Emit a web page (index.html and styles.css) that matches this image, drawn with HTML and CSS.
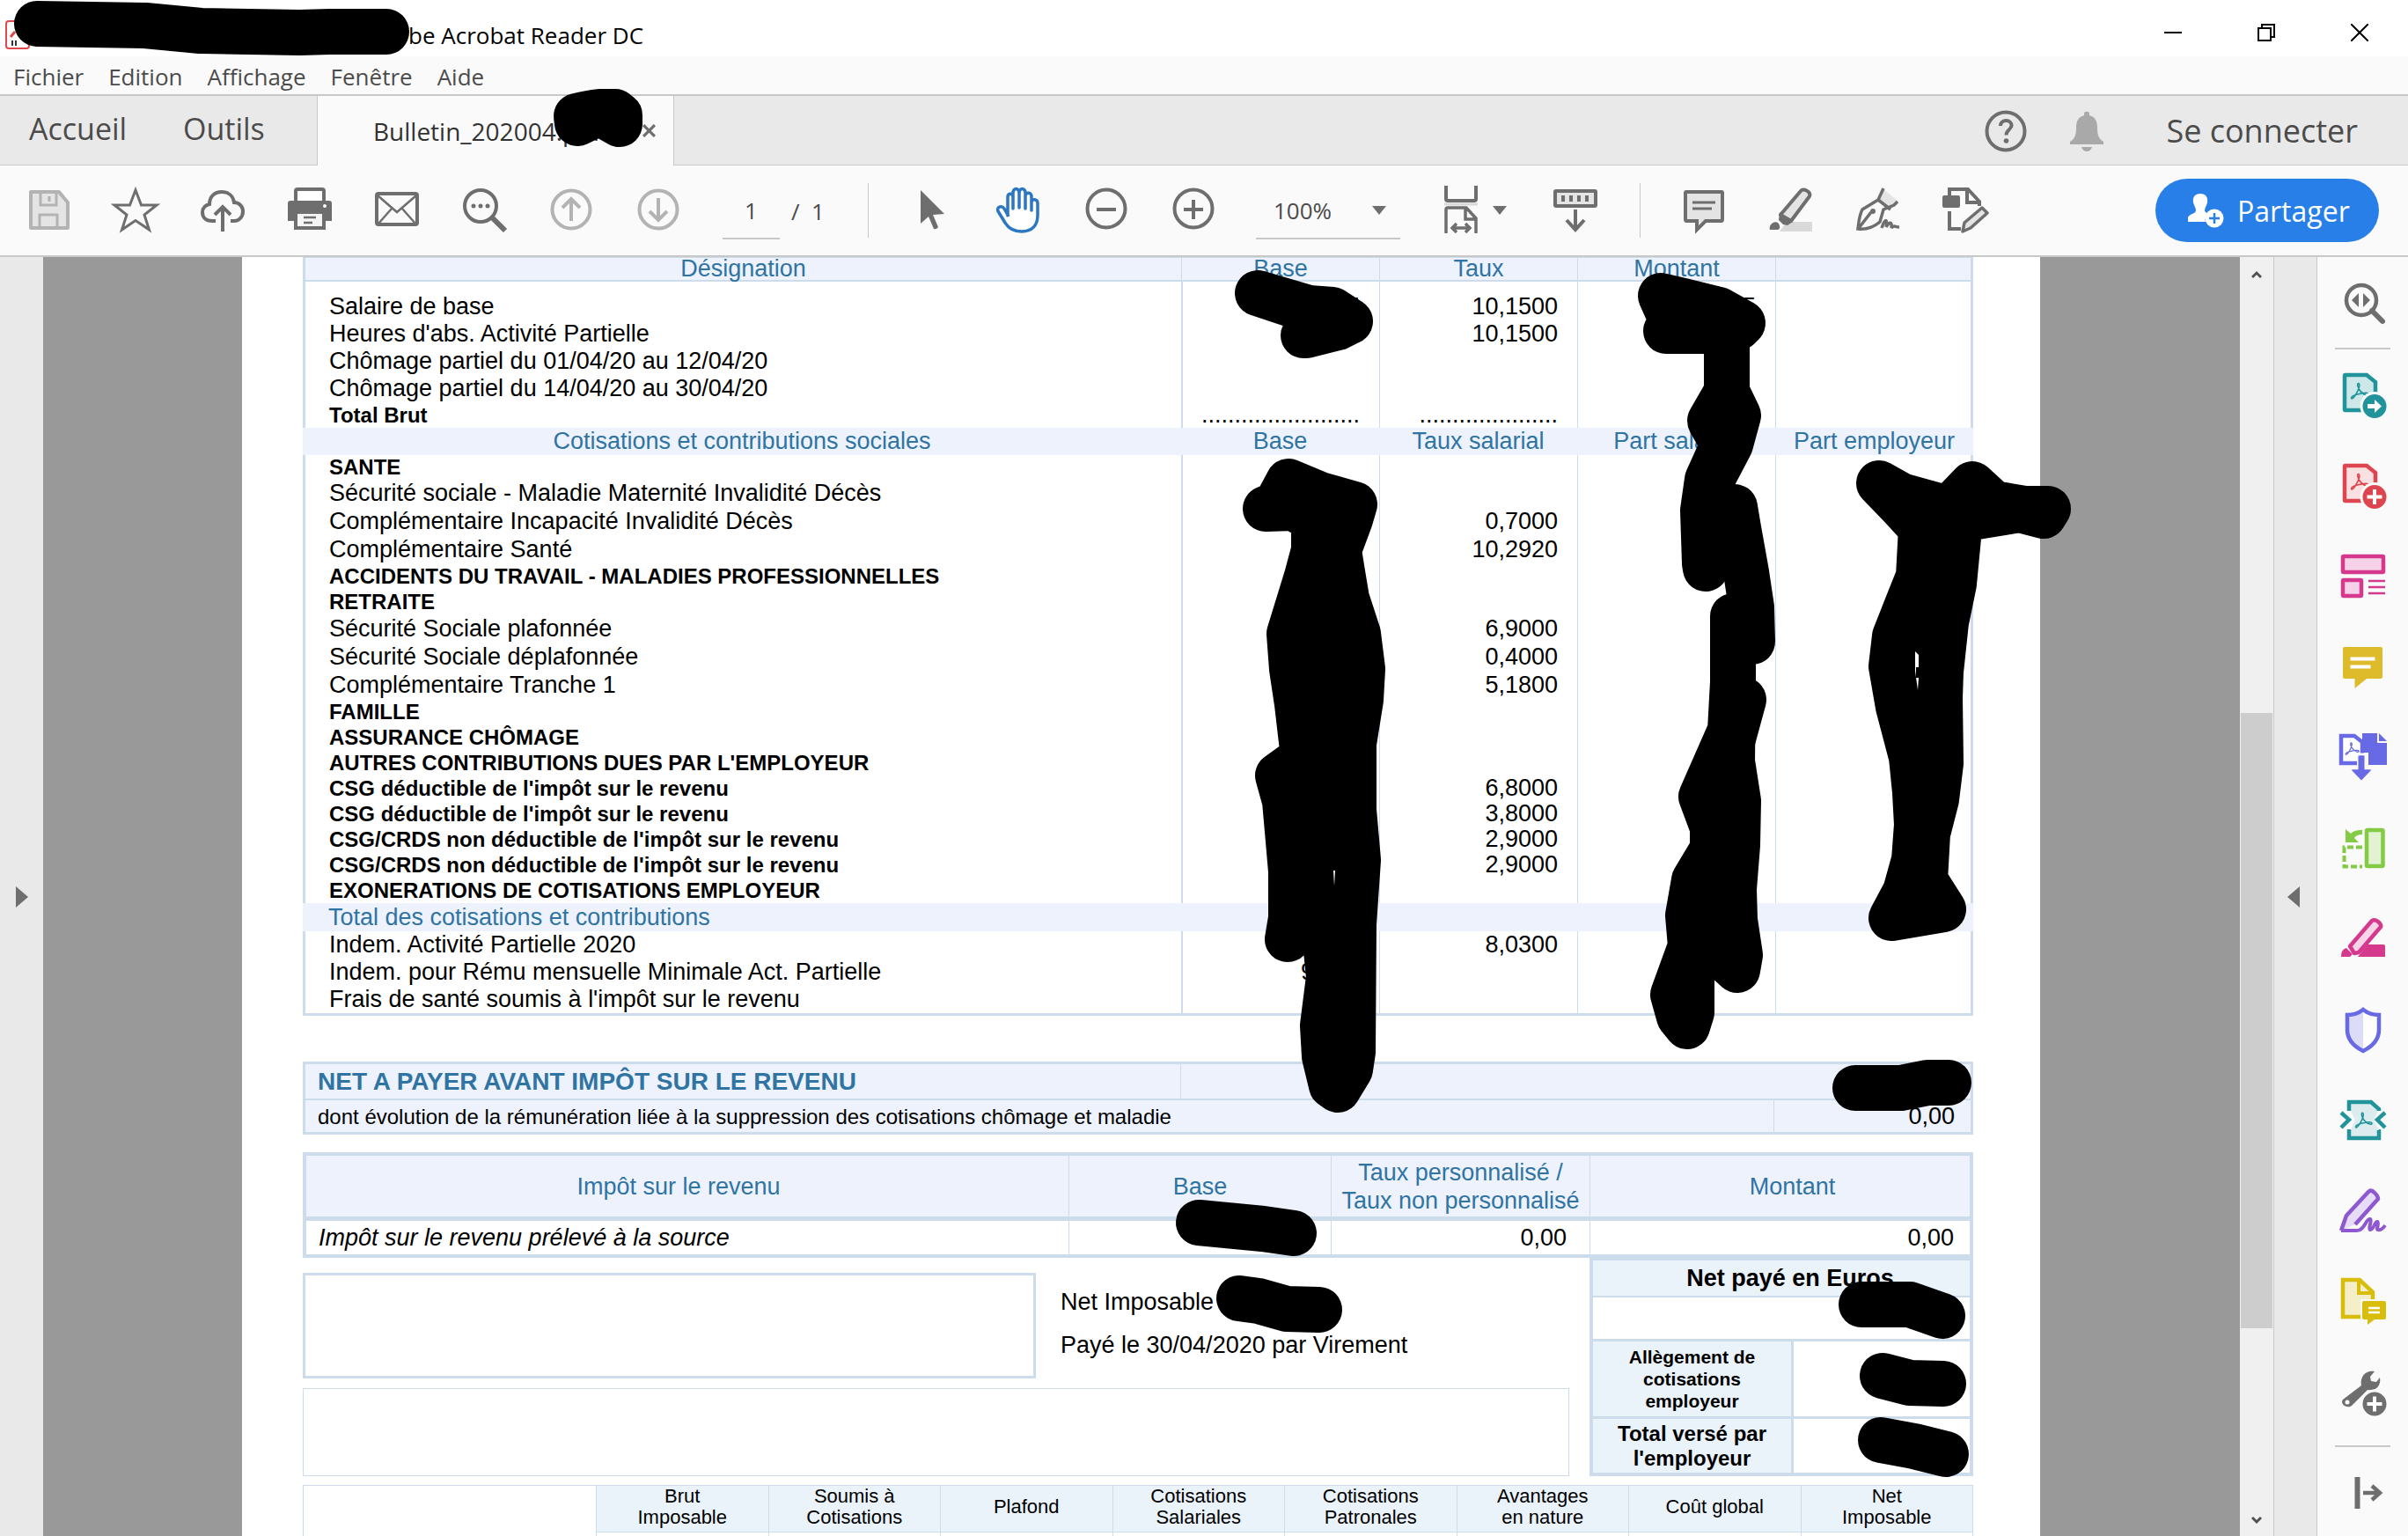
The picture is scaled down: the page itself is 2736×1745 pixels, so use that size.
FILE: index.html
```html
<!DOCTYPE html>
<html lang="fr">
<head>
<meta charset="utf-8">
<title>Adobe Acrobat Reader DC</title>
<link rel="stylesheet" href="styles.css">
</head>
<body>
<svg class="defs" aria-hidden="true">
  <symbol id="acro" viewBox="0 0 20 20"><path d="M2 18C4 18 9.500 9 9.800 4.500C9.900 1.500 7.500 1.500 8 4.500C8.500 8.500 13 14 17.500 14.500C20 14.500 19.500 12.200 16.500 12.200C12 12.200 2 14.500 1.500 17C1.400 17.700 1.500 18 2 18Z" fill="none" stroke="currentColor" stroke-width="1.500"/></symbol>
</svg>

<header class="titlebar">
  <svg class="app-icon" viewBox="0 0 28 34"><rect x="1" y="1" width="26" height="31" rx="3" fill="#fff" stroke="#e0484d" stroke-width="2"/><path d="M6 19l5-6" stroke="#e0484d" stroke-width="3"/><path d="M8 23v6M12 23v6" stroke="#333" stroke-width="2"/></svg>
  <span class="app-title">be Acrobat Reader DC</span>
  <div class="window-buttons">
    <button type="button" aria-label="Réduire"><svg viewBox="0 0 20 20"><path d="M0 10h20" stroke="#000" stroke-width="2"/></svg></button>
    <button type="button" aria-label="Restaurer"><svg viewBox="0 0 20 20"><path d="M1 5h14v14H1zM5 5V1h14v14h-4" fill="none" stroke="#000" stroke-width="2"/></svg></button>
    <button type="button" aria-label="Fermer"><svg viewBox="0 0 20 20"><path d="M0 0l20 20M20 0L0 20" stroke="#000" stroke-width="2"/></svg></button>
  </div>
  <svg class="marks" width="480" height="70" viewBox="0 0 480 70"><path d="M42 27L165 29L228 35L340 37L375 36L439 36"/></svg>
</header>

<nav class="menubar">
  <button type="button">Fichier</button><button type="button">Edition</button><button type="button">Affichage</button><button type="button">Fenêtre</button><button type="button">Aide</button>
</nav>

<div class="tabbar">
  <button type="button" class="tab-link">Accueil</button>
  <button type="button" class="tab-link">Outils</button>
  <div class="doc-tab">
    <span class="doc-name">Bulletin_202004.pdf</span>
    <button type="button" class="doc-close" aria-label="Fermer l'onglet"><svg viewBox="0 0 14 14"><path d="M1 1l12 12M13 1L1 13" stroke="#6e6e6e" stroke-width="3"/></svg></button>
    <svg class="marks" width="404" height="80" viewBox="362 109 404 80"><path d="M657 140L656 132Q672 128 682 127L700 127L705 131L705 141L682 128Z"/></svg>
  </div>
  <div class="account">
    <button type="button" aria-label="Aide"><svg viewBox="0 0 48 48"><circle cx="24" cy="24" r="21.500" fill="none" stroke="#6e6e6e" stroke-width="4"/><path d="M18 18c0-4 3-6 6.500-6s6 2.500 6 5.500c0 4.500-6 5-6 11" fill="none" stroke="#6e6e6e" stroke-width="4"/><circle cx="24.500" cy="35" r="2.800" fill="#6e6e6e"/></svg></button>
    <button type="button" aria-label="Notifications"><svg viewBox="0 0 48 48"><path d="M21 6V4c0-3 6-3 6 0v2c7 2 9 7 9 14 0 9 2 13 7 16v3H5v-3c5-3 7-7 7-16 0-7 2-12 9-14zM18 42h12c-1 3-3 5-6 5s-5-2-6-5z" fill="#a9a9a9"/></svg></button>
    <a href="#connexion">Se connecter</a>
  </div>
</div>

<div class="toolbar">
  <button type="button" class="tool off" aria-label="Enregistrer"><svg viewBox="0 0 56 56"><path d="M8 7h32l10 12v29H8z" fill="#e4e4e4" stroke="currentColor" stroke-width="4" stroke-linejoin="round"/><path d="M19 7v15h18V7M18 48V33h20v15M29 12v6" fill="none" stroke="currentColor" stroke-width="3"/></svg></button>
  <button type="button" class="tool" aria-label="Favoris"><svg viewBox="0 0 56 56"><path d="M28 5l6.500 17H52L38 33l5.500 17L28 39.500 12.500 50 18 33 4 22h17.500z" fill="none" stroke="currentColor" stroke-width="3"/></svg></button>
  <button type="button" class="tool" aria-label="Envoyer vers le cloud"><svg viewBox="0 0 56 56"><path d="M20 40h-4C9 40 5 36 5 30c0-5 4-8 8-9 0-9 6-14 14-14s13 5 14 12c6 0 10 5 10 10 0 6-4 11-10 11h-4" fill="none" stroke="currentColor" stroke-width="4"/><path d="M28 52V25M19 33l9-9 9 9" fill="none" stroke="currentColor" stroke-width="4"/></svg></button>
  <button type="button" class="tool" aria-label="Imprimer"><svg viewBox="0 0 56 56"><path d="M12 17V6q0-2 2-2h28q2 0 2 2v11" fill="#fff" stroke="currentColor" stroke-width="4"/><path d="M6 17h44q3 0 3 3v20h-7V30H10v10H3V20q0-3 3-3z" fill="currentColor"/><path d="M12 30h32v18H12z" fill="#f4f4f4" stroke="currentColor" stroke-width="4"/><path d="M21 36h14M21 42h10" stroke="currentColor" stroke-width="2.500"/><circle cx="45" cy="23" r="2" fill="#fff"/></svg></button>
  <button type="button" class="tool" aria-label="Courriel"><svg viewBox="0 0 56 56"><rect x="5" y="9" width="46" height="35" rx="2" fill="none" stroke="currentColor" stroke-width="4"/><path d="M6 11l22 19L50 11M7 43l15-17M49 43L34 26" fill="none" stroke="currentColor" stroke-width="2.500"/></svg></button>
  <button type="button" class="tool" aria-label="Rechercher"><svg viewBox="0 0 56 56"><circle cx="24" cy="23" r="18" fill="none" stroke="currentColor" stroke-width="4"/><path d="M37 36l15 15" stroke="currentColor" stroke-width="6"/><g fill="currentColor"><circle cx="16" cy="23" r="2.500"/><circle cx="24" cy="23" r="2.500"/><circle cx="32" cy="23" r="2.500"/></g></svg></button>
  <button type="button" class="tool off" aria-label="Page précédente"><svg viewBox="0 0 56 56"><circle cx="28" cy="27" r="21.500" fill="none" stroke="currentColor" stroke-width="4"/><path d="M28 40V15M18 25l10-10 10 10" fill="none" stroke="currentColor" stroke-width="4"/></svg></button>
  <button type="button" class="tool off" aria-label="Page suivante"><svg viewBox="0 0 56 56"><circle cx="28" cy="27" r="21.500" fill="none" stroke="currentColor" stroke-width="4"/><path d="M28 14v25M18 29l10 10 10-10" fill="none" stroke="currentColor" stroke-width="4"/></svg></button>
  <label class="page-field"><input type="text" value="1" aria-label="Page"><span>/&nbsp; 1</span></label>
  <span class="rule"></span>
  <button type="button" class="tool" aria-label="Sélection"><svg viewBox="0 0 56 56"><path d="M15 5v38l9-8 6 14q3 1 5-2l-6-14 13-1z" fill="currentColor"/></svg></button>
  <button type="button" class="tool on" aria-label="Main"><svg viewBox="0 0 56 56"><path d="M15 35V13c0-5 6-5 6 0v13-18c0-6 7-6 7 0v17V8c0-6 7-6 7 0v18V12c0-5 7-5 7 0v16-9c0-5 7-4 7 1v13c0 13-7 19-18 19C20 52 15 47 12 42L4 29c-2-5 4-7 7-3l5 9" fill="#fff" stroke="currentColor" stroke-width="3.500" stroke-linejoin="round"/></svg></button>
  <button type="button" class="tool" aria-label="Zoom arrière"><svg viewBox="0 0 56 56"><circle cx="28" cy="26" r="21.500" fill="none" stroke="currentColor" stroke-width="4"/><path d="M17 27h22" stroke="currentColor" stroke-width="4"/></svg></button>
  <button type="button" class="tool" aria-label="Zoom avant"><svg viewBox="0 0 56 56"><circle cx="28" cy="26" r="21.500" fill="none" stroke="currentColor" stroke-width="4"/><path d="M17 27h22M28 16v22" stroke="currentColor" stroke-width="4"/></svg></button>
  <label class="zoom-field"><select aria-label="Zoom"><option>100%</option></select><svg viewBox="0 0 16 10"><path d="M0 0h16l-8 10z" fill="#6e6e6e"/></svg></label>
  <button type="button" class="tool fit" aria-label="Ajuster"><svg viewBox="0 0 56 56"><path d="M10 0v15q0 2 2 2h30q2 0 2-2V0" fill="none" stroke="currentColor" stroke-width="4"/><path d="M8 21h38" stroke="#d9d9d9" stroke-width="3"/><path d="M10 54V27q0-2 2-2h21l11 12v17M32 25v13h12M17 48h20M22 43l-5 5 5 5M32 43l5 5-5 5" fill="none" stroke="currentColor" stroke-width="3.500"/></svg><svg class="caret" viewBox="0 0 16 10"><path d="M0 0h16l-8 10z" fill="currentColor"/></svg></button>
  <button type="button" class="tool keys" aria-label="Défilement"><svg viewBox="0 0 56 56"><rect x="5" y="6" width="46" height="17" rx="1" fill="#e4e4e4" stroke="currentColor" stroke-width="4"/><path d="M14 11v7M23 11v7M32 11v7M41 11v7" stroke="currentColor" stroke-width="4"/><path d="M28 27v22M18 39l10 11 10-11" fill="none" stroke="currentColor" stroke-width="4"/></svg></button>
  <span class="rule"></span>
  <button type="button" class="tool" aria-label="Commentaire"><svg viewBox="0 0 56 56"><path d="M8 7h40q1 0 1 1v30q0 2-1 2H30L20 50V40H8q-1 0-1-2V8q0-1 1-1z" fill="#e4e4e4" stroke="currentColor" stroke-width="4"/><path d="M15 19h26M15 26h22" stroke="currentColor" stroke-width="3"/></svg></button>
  <button type="button" class="tool" aria-label="Surligner"><svg viewBox="0 0 56 56"><path d="M23 41h29v11H15z" fill="#d9d9d9"/><path d="M16 33L39 6c3-4 12 1 10 6L28 40z" fill="#e4e4e4" stroke="currentColor" stroke-width="4" stroke-linejoin="round"/><path d="M15 30l15 11-6 4-5-1-5-5zM4 50c-2-5 5-11 9-8 3 3 3 7 0 8z" fill="currentColor"/></svg></button>
  <button type="button" class="tool" aria-label="Signer"><svg viewBox="0 0 56 56"><path d="M34 4l-6 13 12 10 10-10z" fill="#e4e4e4"/><path d="M34 3l-6 13-18 11C6 35 6 42 5 49c9 1 18-2 25-8l4-14 12-5 4-4M6 48l14-18M28 16l14 11" fill="none" stroke="currentColor" stroke-width="3.500"/><circle cx="22" cy="29" r="3" fill="currentColor"/><path d="M32 48c4-12 7-10 5-1 4-7 7-6 6 1 3-4 4-1 9-1" fill="none" stroke="currentColor" stroke-width="3.500"/></svg></button>
  <button type="button" class="tool" aria-label="Modifier"><svg viewBox="0 0 56 56"><path d="M10 12V4h21l13 14v5M30 4v15h14M10 29v20h13" fill="none" stroke="currentColor" stroke-width="4"/><rect x="2" y="11" width="20" height="14" rx="2" fill="currentColor"/><path d="M27 42l20-17 6 6-19 17-9 4z" fill="#e4e4e4" stroke="currentColor" stroke-width="3.500" stroke-linejoin="round"/></svg></button>
  <button type="button" class="share"><svg viewBox="0 0 42 40"><path d="M15 1c6 0 9 4 8 10-1 4-3 6-3 9 0 2 3 3 5 5-4 2-5 5-4 8H1V28c1-4 9-4 9-8 0-3-2-5-3-9C6 5 9 1 15 1z" fill="#fff"/><circle cx="31" cy="29" r="10.500" fill="#fff"/><path d="M31 23v12M25 29h12" stroke="#277fe7" stroke-width="2.500"/></svg>Partager</button>
</div>

<div class="workspace">
  <button type="button" class="side-strip" aria-label="Volet gauche"><svg viewBox="0 0 14 24"><path d="M0 0l14 12L0 24z" fill="#6e6e6e"/></svg></button>
  <main class="canvas">
    <article class="sheet">
      <table class="pay">
        <colgroup><col><col class="num"><col class="num"><col class="num"><col class="num"></colgroup>
        <tbody class="tight">
        <tr class="top"><th>Désignation</th><th>Base</th><th>Taux</th><th>Montant</th><th></th></tr>
        <tr class="line spaced"><td>Salaire de base</td><td>5</td><td>10,1500</td><td>5</td><td></td></tr>
        <tr class="line"><td>Heures d'abs. Activité Partielle</td><td></td><td>10,1500</td><td></td><td></td></tr>
        <tr class="line"><td>Chômage partiel du 01/04/20 au 12/04/20</td><td></td><td></td><td></td><td></td></tr>
        <tr class="line"><td>Chômage partiel du 14/04/20 au 30/04/20</td><td></td><td></td><td></td><td></td></tr>
        <tr class="line strong dots"><td>Total Brut</td><td>........................</td><td>.....................</td><td></td><td></td></tr>
        </tbody>
        <tbody>
        <tr class="band"><th>Cotisations et contributions sociales</th><th>Base</th><th>Taux salarial</th><th>Part salarial</th><th>Part employeur</th></tr>
        <tr class="line strong first"><td>SANTE</td><td></td><td></td><td></td><td></td></tr>
        <tr class="line"><td>Sécurité sociale - Maladie Maternité Invalidité Décès</td><td></td><td></td><td></td><td></td></tr>
        <tr class="line"><td>Complémentaire Incapacité Invalidité Décès</td><td></td><td>0,7000</td><td></td><td class="inset">6</td></tr>
        <tr class="line"><td>Complémentaire Santé</td><td></td><td>10,2920</td><td></td><td></td></tr>
        <tr class="line strong"><td>ACCIDENTS DU TRAVAIL - MALADIES PROFESSIONNELLES</td><td></td><td></td><td></td><td></td></tr>
        <tr class="line strong"><td>RETRAITE</td><td></td><td></td><td></td><td></td></tr>
        <tr class="line"><td>Sécurité Sociale plafonnée</td><td></td><td>6,9000</td><td></td><td></td></tr>
        <tr class="line"><td>Sécurité Sociale déplafonnée</td><td></td><td>0,4000</td><td></td><td></td></tr>
        <tr class="line"><td>Complémentaire Tranche 1</td><td></td><td>5,1800</td><td></td><td></td></tr>
        <tr class="line strong"><td>FAMILLE</td><td></td><td></td><td></td><td></td></tr>
        <tr class="line strong"><td>ASSURANCE CHÔMAGE</td><td></td><td></td><td></td><td></td></tr>
        <tr class="line strong"><td>AUTRES CONTRIBUTIONS DUES PAR L'EMPLOYEUR</td><td></td><td></td><td></td><td></td></tr>
        <tr class="line strong"><td>CSG déductible de l'impôt sur le revenu</td><td></td><td>6,8000</td><td></td><td></td></tr>
        <tr class="line strong"><td>CSG déductible de l'impôt sur le revenu</td><td></td><td>3,8000</td><td></td><td></td></tr>
        <tr class="line strong"><td>CSG/CRDS non déductible de l'impôt sur le revenu</td><td></td><td>2,9000</td><td></td><td></td></tr>
        <tr class="line strong"><td>CSG/CRDS non déductible de l'impôt sur le revenu</td><td></td><td>2,9000</td><td></td><td></td></tr>
        <tr class="line strong"><td>EXONERATIONS DE COTISATIONS EMPLOYEUR</td><td></td><td></td><td></td><td>9</td></tr>
        </tbody>
        <tbody class="tight">
        <tr class="band"><th class="start">Total des cotisations et contributions</th><th></th><th></th><th></th><th></th></tr>
        <tr class="line"><td>Indem. Activité Partielle 2020</td><td></td><td>8,0300</td><td></td><td></td></tr>
        <tr class="line"><td>Indem. pour Rému mensuelle Minimale Act. Partielle</td><td class="inset">9</td><td></td><td></td><td></td></tr>
        <tr class="line last"><td>Frais de santé soumis à l'impôt sur le revenu</td><td></td><td></td><td></td><td></td></tr>
        </tbody>
      </table>

      <section class="net">
        <div class="net-row main"><strong>NET A PAYER AVANT IMPÔT SUR LE REVENU</strong><span></span></div>
        <div class="net-row detail"><span>dont évolution de la rémunération liée à la suppression des cotisations chômage et maladie</span><span>0,00</span></div>
      </section>

      <table class="tax">
        <colgroup><col><col class="c-base"><col class="c-rate"><col class="c-amount"></colgroup>
        <tr><th>Impôt sur le revenu</th><th>Base</th><th>Taux personnalisé /<br>Taux non personnalisé</th><th>Montant</th></tr>
        <tr><td>Impôt sur le revenu prélevé à la source</td><td></td><td>0,00</td><td>0,00</td></tr>
      </table>

      <div class="summary">
        <div class="summary-left">
          <div class="summary-top">
            <div class="frame"></div>
            <div class="paid"><p>Net Imposable</p><p>Payé le 30/04/2020 par Virement</p></div>
          </div>
          <div class="frame thin"></div>
        </div>
        <table class="totals">
          <colgroup><col class="c-label"><col></colgroup>
          <tr><th colspan="2" class="head">Net payé en Euros</th></tr>
          <tr><td colspan="2" class="amount"></td></tr>
          <tr><th class="small">Allègement de<br>cotisations<br>employeur</th><td></td></tr>
          <tr><th class="medium">Total versé par<br>l'employeur</th><td></td></tr>
        </table>
      </div>

      <table class="cumul">
        <colgroup><col class="c-first"><col><col><col><col><col><col><col><col></colgroup>
        <tr><td></td><th>Brut<br>Imposable</th><th>Soumis à<br>Cotisations</th><th>Plafond</th><th>Cotisations<br>Salariales</th><th>Cotisations<br>Patronales</th><th>Avantages<br>en nature</th><th>Coût global</th><th>Net<br>Imposable</th></tr>
        <tr><td></td><td></td><td></td><td></td><td></td><td></td><td></td><td></td><td></td></tr>
      </table>

      <svg class="marks" width="2043" height="1453" viewBox="275 292 2043 1453">
        <path d="M1429 333L1487 350L1514 352L1534 365L1520 372L1484 381L1481 381L1495 355Z"/>
        <path d="M1887 336L1913 342L1953 352L1980 367L1975 372L1945 376L1893 376L1900 365Z"/>
        <path d="M1962 380L1962 445L1943 478L1958 505L1940 545L1935 580L1937 640L1938 646L1937 580L1945 545L1966 505L1975 472L1962 445Z"/>
        <path class="open" d="M1971 576L1975 600L1984 650L1990 690L1991 729"/>
        <path class="open" d="M1969 700L1969 790L1981 795L1966 850"/>
        <path d="M1969 775L1966 830L1933 905L1946 940L1946 965L1925 1000L1918 1040L1921 1075L1901 1130L1908 1155L1917 1166L1922 1150L1922 1095L1950 1080L1974 1102L1977 1085L1971 1045L1970 1010L1974 960L1975 910L1968 865Z"/>
        <path d="M1464 547L1500 562L1539 573L1534 590L1521 625L1525 650L1530 680L1543 720L1548 760L1546 795L1538 845L1538 920L1543 977L1538 1050L1537 1195L1534 1215L1520 1238L1513 1233L1505 1200L1503 1165L1510 1110L1505 1060L1480 1050L1463 1067L1467 1043L1467 990L1460 910L1452 881L1481 860L1474 800L1468 760L1465 720L1485 655L1493 625L1493 590L1470 577L1438 578L1450 573Z"/>
        <path d="M2135 549L2160 563L2214 578L2241 550L2265 572L2300 578L2327 578L2322 586L2295 579L2227 590L2220 663L2211 707L2205 763L2204 793L2205 867L2200 908L2190 947L2187 1000L2208 1033L2149 1043L2165 1013L2175 977L2178 937L2176 900L2172 860L2157 803L2149 757L2153 723L2166 690L2180 655L2183 600L2160 575Z"/>
        <path class="open" d="M2108 1236H2160L2190 1230H2214"/>
        <path class="open" d="M1362 1389L1435 1396L1470 1401"/>
        <path class="open" d="M1408 1475L1430 1478L1462 1487L1499 1488"/>
        <path class="open" d="M2115 1482H2170L2207 1495"/>
        <path class="open" d="M2139 1563L2170 1571L2208 1572"/>
        <path class="open" d="M2137 1636L2175 1643L2211 1652"/>
        <g class="gap"><path d="M2176 740l4 4v14h-3v12h3l-1 14-3-22z"/><path d="M1515 989h2l-1 17z"/></g>
      </svg>
    </article>
  </main>
  <div class="scrollbar">
    <svg viewBox="0 0 12 10"><path d="M1 8l5-5 5 5" fill="none" stroke="#505050" stroke-width="3"/></svg>
    <div class="thumb"></div>
    <svg viewBox="0 0 12 10"><path d="M1 2l5 5 5-5" fill="none" stroke="#505050" stroke-width="3"/></svg>
  </div>
  <button type="button" class="side-strip right" aria-label="Volet droit"><svg viewBox="0 0 14 24"><path d="M14 0L0 12l14 12z" fill="#6e6e6e"/></svg></button>
  <aside class="tools">
    <button type="button" aria-label="Rechercher des outils"><svg viewBox="0 0 56 56" class="gray"><circle cx="26" cy="25" r="17" fill="none" stroke="currentColor" stroke-width="4.500"/><path d="M38 37l12 12" stroke="currentColor" stroke-width="6" stroke-linecap="round"/><path d="M23 17v16l-8-8zM28 17v16l8-8z" fill="currentColor"/></svg></button>
    <hr>
    <button type="button" aria-label="Exporter"><svg viewBox="0 0 56 56" class="teal"><path d="M8 5h24l10 8v32H8q-1 0-1-1V6q0-1 1-1z" fill="#cde8e8" stroke="currentColor" stroke-width="4.500"/><use href="#acro" x="13" y="12" width="22" height="22"/><circle cx="41" cy="40.500" r="15" fill="currentColor" stroke="#fafafa" stroke-width="3"/><path d="M33 38h8v-5l8 7.500-8 7.500v-5h-8z" fill="#fff"/></svg></button>
    <button type="button" aria-label="Créer"><svg viewBox="0 0 56 56" class="red"><path d="M8 5h24l10 8v32H8q-1 0-1-1V6q0-1 1-1z" fill="#fbe0e2" stroke="currentColor" stroke-width="4.500"/><use href="#acro" x="13" y="12" width="22" height="22"/><circle cx="41" cy="40.500" r="15" fill="currentColor" stroke="#fafafa" stroke-width="3"/><path d="M32.500 40.500h17M41 32v17" stroke="#fff" stroke-width="4"/></svg></button>
    <button type="button" aria-label="Organiser"><svg viewBox="0 0 56 56" class="pink"><g fill="#f6d2e8" stroke="currentColor" stroke-width="4.500"><rect x="5" y="5" width="46" height="18" rx="1"/><rect x="5" y="32" width="21" height="18" rx="1"/></g><path d="M34 33h19M34 40h19M34 47h19" stroke="currentColor" stroke-width="2.500"/></svg></button>
    <button type="button" aria-label="Commenter"><svg viewBox="0 0 56 56" class="gold"><path d="M7 5h41q2 0 2 2v32q0 2-2 2H32L18.500 52V41H7q-2 0-2-2V7q0-2 2-2z" fill="currentColor"/><path d="M13.500 18.500h28M13.500 27.500h23" stroke="#fff" stroke-width="4"/></svg></button>
    <button type="button" aria-label="Combiner"><svg viewBox="0 0 56 56" class="blue"><path d="M3 3h15l9 7v24H3z" fill="#fff" stroke="currentColor" stroke-width="4.500"/><use href="#acro" x="7" y="9" width="17" height="17"/><path d="M27 0h17v11h11v25H34V22h-7z" fill="currentColor"/><path d="M46 0l9 9h-9z" fill="currentColor"/><path d="M22.500 24h7v16h10L26 54 12.500 40h10z" fill="currentColor" stroke="#fafafa" stroke-width="3"/><path d="M22.500 25.500h7v16h8L26 53.500 14.500 41.500h8z" fill="currentColor"/></svg></button>
    <button type="button" aria-label="Recadrer"><svg viewBox="0 0 56 56" class="green"><rect x="32" y="7" width="18.500" height="41" rx="1" fill="#e2f2d3" stroke="currentColor" stroke-width="4.500"/><path d="M27 26.500H6.500v22H27" fill="none" stroke="currentColor" stroke-width="4" stroke-dasharray="7 3"/><path d="M27 7c-7 0-10 1-13 4l-6-5v15h15l-5-5c2-3 5-4 9-4z" fill="currentColor"/></svg></button>
    <button type="button" aria-label="Biffer"><svg viewBox="0 0 56 56" class="pink"><path d="M13 36L38 7q3-2 7 1t3 6L23 43l-5 1z" fill="#f9d3e8" stroke="currentColor" stroke-width="4.500" stroke-linejoin="round"/><path d="M33 34h18q2 0 2 2v12H22zM3 48c0-6 2-9 6-10l7 7-3 3z" fill="currentColor"/></svg></button>
    <button type="button" aria-label="Protéger"><svg viewBox="0 0 56 56" class="blue"><path d="M28 5c5 4 11 6 18 6v17c0 12-8 19-18 24C18 47 10 40 10 28V11c7 0 13-2 18-6z" fill="#fff"/><path d="M28 5v47C18 47 10 40 10 28V11c7 0 13-2 18-6z" fill="#dcdcf7"/><path d="M28 5c5 4 11 6 18 6v17c0 12-8 19-18 24C18 47 10 40 10 28V11c7 0 13-2 18-6z" fill="none" stroke="currentColor" stroke-width="4.500"/></svg></button>
    <button type="button" aria-label="Optimiser"><svg viewBox="0 0 56 56" class="teal"><path d="M12 17V7h25l9 8v2M12 38v10h34V38" fill="#dcebee" stroke="currentColor" stroke-width="4.500"/><path d="M14 17h31L40 27l6 12H14l5-12z" fill="#dcebee"/><use href="#acro" x="18" y="17" width="21" height="21"/><path d="M3 19l9 8-9 9M53 19l-9 8 9 9" fill="none" stroke="currentColor" stroke-width="4.500"/></svg></button>
    <button type="button" aria-label="Remplir et signer"><svg viewBox="0 0 56 56" class="violet"><path d="M3 50l6-17L34 6q3-3 7 1t4 7L19 43" fill="#e6dcf7" stroke="currentColor" stroke-width="4.500" stroke-linejoin="round"/><path d="M3 50h18c9 0 10-14 15-13 3 1-3 11 0 12 4 0 5-9 8-9 3 1-2 9 1 9 3 1 6-2 8-5" fill="none" stroke="currentColor" stroke-width="4"/></svg></button>
    <button type="button" aria-label="Envoyer pour commentaires"><svg viewBox="0 0 56 56" class="yellow"><path d="M5 3h19l15 14v28H5z" fill="#f5efc9" stroke="currentColor" stroke-width="4.500"/><path d="M23 3v15h16" fill="none" stroke="currentColor" stroke-width="4"/><path d="M25 25h31v24H43l-11 9v-9h-7z" fill="#fafafa"/><path d="M29 27h23q2 0 2 2v17q0 2-2 2H41l-8 6v-6h-4q-2 0-2-2V29q0-2 2-2z" fill="currentColor"/><path d="M34 35h13M34 40h13" stroke="#fff" stroke-width="2.500"/></svg></button>
    <button type="button" aria-label="Autres outils"><svg viewBox="0 0 56 56" class="gray"><path d="M5 36L26 20C24 9 32 2 41 4l-5 6 1 5 6 1 4-5c2 9-5 16-14 14L15 43c-5 4-14-2-10-7z" fill="currentColor"/><circle cx="10" cy="39" r="2.500" fill="#fff"/><circle cx="41" cy="41" r="15" fill="currentColor" stroke="#fafafa" stroke-width="3"/><path d="M32.500 41h17M41 32.500v17" stroke="#fff" stroke-width="4"/></svg></button>
    <hr class="lower">
    <button type="button" aria-label="Réduire le volet"><svg viewBox="0 0 56 56" class="gray"><path d="M21.500 10v36" stroke="currentColor" stroke-width="6"/><path d="M28 28h18M38 20l9 8-9 8" fill="none" stroke="currentColor" stroke-width="4.500"/></svg></button>
  </aside>
</div>
</body>
</html>
```
FILE: styles.css
```css
* { box-sizing: border-box; }

body {
  margin: 0;
  height: 100vh;
  display: flex;
  flex-direction: column;
  overflow: hidden;
  background: #fff;
  color: #000;
  font-family: "Open Sans", "Noto Sans", sans-serif;
}

button {
  padding: 0;
  border: 0;
  background: none;
  color: inherit;
  font: inherit;
}

.defs { display: none; }

.marks {
  position: absolute;
  left: 0;
  top: 0;
  overflow: visible;
  pointer-events: none;
}
.marks path {
  fill: #000;
  stroke: #000;
  stroke-width: 52px;
  stroke-linecap: round;
  stroke-linejoin: round;
}
.marks .open { fill: none; }
.marks .gap path { fill: #fff; stroke: none; }

/* Title and menus */
.titlebar {
  position: relative;
  flex: none;
  display: flex;
  align-items: center;
  height: 64px;
  padding: 16px 45px 0 6px;
}
.app-icon { width: 28px; height: 34px; }
.app-title { margin-left: 430px; font-size: 26px; line-height: 36px; }
.window-buttons { display: flex; gap: 86px; margin: 0 0 16px auto; padding-top: 10px; }
.window-buttons button { width: 20px; height: 20px; }
.window-buttons svg { display: block; width: 20px; height: 20px; }

.menubar {
  flex: none;
  display: flex;
  gap: 28px;
  height: 45px;
  padding: 2px 0 0 15px;
  border-bottom: 2px solid #c8c8c8;
  background: #fafafa;
  color: #4b4b4b;
  font-size: 26px;
}

/* Tabs */
.tabbar {
  flex: none;
  display: flex;
  height: 79px;
  background: #e9e9e9;
  color: #4b4b4b;
  font-size: 34px;
  box-shadow: inset 0 -1px #c8c8c8;
}
.tab-link { margin-left: 33px; width: 113px; height: 74px; text-align: left; }
.tab-link + .tab-link { margin-left: 62px; width: 92px; }
.doc-tab {
  position: relative;
  display: flex;
  align-items: center;
  width: 406px;
  margin-left: 60px;
  padding: 0 20px 0 63px;
  border: solid #c8c8c8;
  border-width: 0 1px;
  background: #fafafa;
  color: #323232;
  font-size: 28px;
}
.doc-close { margin-left: auto; }
.doc-close svg { display: block; width: 15px; height: 15px; }
.account { display: flex; align-items: center; gap: 44px; margin-left: auto; padding-right: 57px; }
.account svg { display: block; width: 48px; height: 48px; }
.account a { margin-left: 22px; color: inherit; font-size: 36px; text-decoration: none; }

/* Toolbar */
.toolbar {
  flex: none;
  display: flex;
  align-items: center;
  height: 104px;
  padding: 0 33px 0 5px;
  border-bottom: 2px solid #c8c8c8;
  background: #fafafa;
  color: #4b4b4b;
  font-size: 26px;
}
.tool { width: 99px; color: #6e6e6e; }
.tool svg { display: block; width: 56px; height: 56px; margin: 0 auto; }
.tool.off { color: #b3b3b3; }
.tool.on { color: #2b77c2; }
.page-field { display: flex; align-items: center; gap: 13px; width: 165px; margin-left: 24px; padding-top: 2px; }
.page-field input {
  width: 65px;
  height: 64px;
  border: 0;
  border-bottom: 2px solid #c8c8c8;
  background: none;
  color: inherit;
  font: inherit;
  text-align: center;
}
.rule { width: 1px; height: 62px; margin-right: 22px; background: #c8c8c8; }
.zoom-field {
  display: flex;
  align-items: center;
  width: 164px;
  height: 66px;
  margin: 0 42px 0 22px;
  padding: 2px 16px 0 20px;
  border-bottom: 2px solid #c8c8c8;
}
.zoom-field select {
  flex: 1;
  padding: 0;
  border: 0;
  appearance: none;
  background: none;
  color: inherit;
  font: inherit;
}
.zoom-field svg { width: 16px; height: 10px; }
.tool.fit { display: flex; align-items: center; gap: 7px; width: 86px; }
.tool.fit svg { margin: 0; }
.tool.fit .caret { width: 16px; height: 10px; }
.tool.keys { width: 56px; margin: 0 45px 0 43px; }
.share {
  display: flex;
  align-items: center;
  gap: 15px;
  width: 254px;
  height: 72px;
  margin-left: auto;
  padding-left: 36px;
  border-radius: 36px;
  background: #277fe7;
  color: #fff;
  font-size: 32px;
}
.share svg { width: 42px; height: 40px; }

/* Workspace */
.workspace { flex: 1; min-height: 0; display: flex; }
.side-strip { flex: none; width: 49px; background: #e9e9e9; }
.side-strip svg { display: block; width: 14px; height: 24px; margin: 0 auto; }
.side-strip.right { border: solid #c8c8c8; border-width: 0 1px; width: 50px; padding-right: 4px; }
.canvas { flex: 1; min-width: 0; padding: 0 227px 0 226px; background: #999; }
.scrollbar {
  flex: none;
  display: flex;
  flex-direction: column;
  align-items: center;
  justify-content: space-between;
  width: 38px;
  padding: 15px 1px 13px;
  background: #f0f0f0;
}
.scrollbar svg { width: 12px; height: 10px; }
.thumb { width: 100%; height: 49%; margin-top: 280px; background: #cdcdcd; }
.tools { flex: none; width: 103px; background: #fafafa; }
.tools button { display: block; width: 103px; height: 103px; }
.tools svg { display: block; width: 56px; height: 56px; margin: 0 auto; }
.tools hr { width: 63px; height: 2px; margin: 0 auto; border: 0; background: #c8c8c8; }
.tools .lower { margin-top: 9px; }
.gray { color: #6e6e6e; }
.teal { color: #20949a; }
.red { color: #dd464f; }
.pink { color: #d5398e; }
.gold { color: #debb2a; }
.blue { color: #6769e5; }
.green { color: #84cb45; }
.violet { color: #8e59d0; }
.yellow { color: #d8be0b; }

/* Document */
.sheet {
  position: relative;
  height: 100%;
  padding: 0 76px 0 69px;
  background: #fff;
  font: 27px/32px "Liberation Sans", Arial, sans-serif;
}
.sheet table { width: 100%; border-spacing: 0; table-layout: fixed; }
.sheet td, .sheet th { padding: 0; font-weight: 400; }
.pay th, .tax th, .main { color: #2f74a2; }

.num { width: 225px; }
.pay th { background: #edf2fd; line-height: 31px; }
.pay .start { padding-left: 29px; line-height: 32px; text-align: left; }
.pay .top th {
  height: 28px;
  border: solid #cddceb;
  border-width: 1px 0 2px 1px;
  line-height: 25px;
}
.pay .top th:first-child { border-left-width: 3px; }
.pay .top th:last-child { border-right-width: 3px; }
.pay .line td {
  height: 32px;
  padding-right: 22px;
  border-left: 1px solid #cddceb;
  text-align: right;
  white-space: nowrap;
}
.pay .tight td { height: 31px; line-height: 31px; }
.pay .line td:first-child { padding-left: 27px; border-left-width: 3px; text-align: left; }
.pay .line td:nth-child(2) { border-left-width: 2px; }
.pay .line td:last-child { border-right: 3px solid #cddceb; }
.pay .spaced td { padding-top: 13px; }
.pay .strong td { height: 29px; line-height: 29px; }
.pay .strong td:first-child { font-size: 24px; font-weight: 700; }
.pay .first td { height: 27px; line-height: 26px; }
.pay .line .inset { padding-right: 74px; }
.pay .last td { border-bottom: 3px solid #cddceb; }

.net { margin-top: 52px; border: 3px solid #cddceb; background: #edf2fd; }
.net-row { display: flex; padding-left: 14px; }
.net-row > :first-child { flex: 1; }
.main { height: 39px; font-size: 28px; line-height: 40px; }
.main span { width: 898px; border-left: 1px solid #cddceb; }
.detail { height: 38px; border-top: 2px solid #cddceb; color: #000; font-size: 24px; line-height: 37px; }
.detail span + span { width: 224px; padding-right: 18px; border-left: 1px solid #cddceb; font-size: 27px; text-align: right; }

.tax { margin-top: 20px; border: 4px solid #cddceb; }
.c-base { width: 298px; }
.c-rate { width: 294px; }
.c-amount { width: 432px; }
.tax th { height: 74px; border-bottom: 5px solid #cddceb; background: #edf2fd; }
.tax th:first-child { padding-right: 20px; }
.tax th:last-child { padding-left: 28px; }
.tax td { height: 38px; padding-right: 26px; text-align: right; }
.tax td:first-child { padding-left: 14px; font-style: italic; text-align: left; }
.tax td:last-child { padding-right: 18px; }
.tax th + th, .tax td + td { border-left: 1px solid #cddceb; }

.summary { display: flex; justify-content: space-between; }
.summary-left { flex: 1; display: flex; flex-direction: column; gap: 11px; padding-top: 17px; }
.summary-top { display: flex; }
.frame { width: 833px; height: 120px; border: 3px solid #cddceb; }
.frame.thin { width: auto; height: 100px; margin-right: 23px; border-width: 1px; }
.paid { padding: 17px 0 0 28px; }
.paid p { margin: 0 0 17px; }
.summary .totals { flex: none; width: 436px; border: 4px solid #cddceb; border-top-width: 3px; }
.c-label { width: 225px; }
.totals th { background: #eaf2fa; border-bottom: 3px solid #cddceb; }
.totals td { border-bottom: 3px solid #cddceb; border-left: 3px solid #cddceb; }
.totals tr:last-child > * { border-bottom: 0; }
.totals .head { height: 42px; padding-left: 20px; border-bottom-width: 2px; font-weight: 700; }
.totals .amount { height: 49px; border-left: 0; }
.totals .small { height: 88px; font-size: 21px; line-height: 25px; font-weight: 700; }
.totals .medium { height: 60px; font-size: 24px; line-height: 28px; font-weight: 700; }

.cumul { margin-top: 10px; border: solid #cddceb; border-width: 1px 1px 0; }
.c-first { width: 332px; }
.sheet .cumul th { height: 53px; padding-bottom: 4px; background: #eaf2fa; font-size: 22px; line-height: 24px; border-bottom: 1px solid #cddceb; }
.cumul tr > * + * { border-left: 1px solid #cddceb; }
.cumul td { height: 20px; }
```
